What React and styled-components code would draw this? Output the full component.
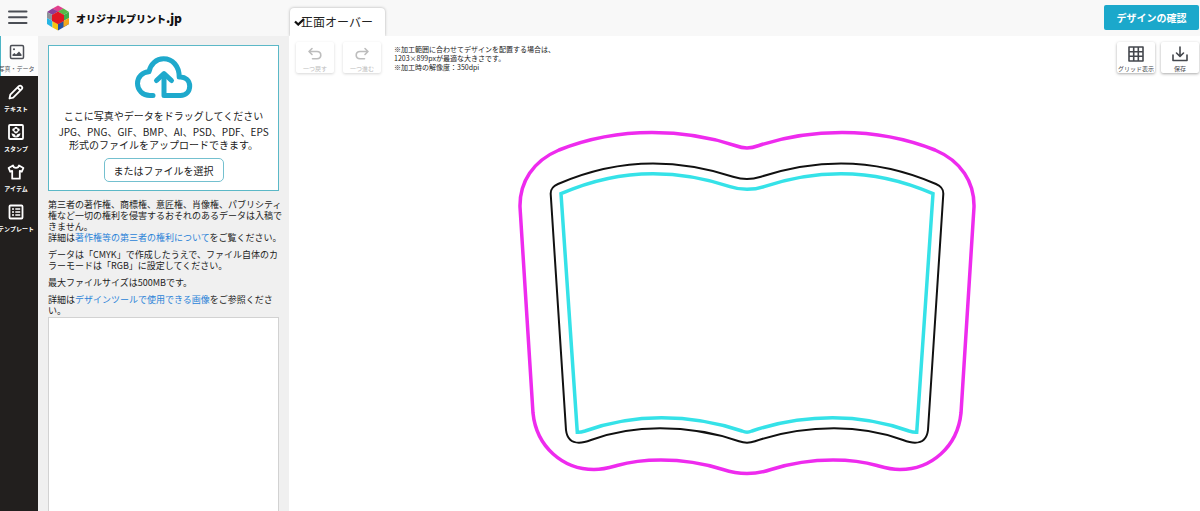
import React from "react";
import styled, { createGlobalStyle } from "styled-components";

const GlobalStyle = createGlobalStyle`
  * { box-sizing: border-box; }
  body {
    margin: 0;
    background: #fff;
    color: #222;
    font-family: "Noto Sans CJK JP", "Noto Sans", sans-serif;
  }
  button { font-family: inherit; cursor: pointer; }
  p { margin: 0; }
  svg { display: block; flex: none; }
`;

const Page = styled.div`
  display: flex;
  flex-direction: column;
  min-height: 100vh;
`;

const Header = styled.header`
  display: flex;
  align-items: stretch;
  height: 36px;
  background: #f8f8f8;
`;

const Brand = styled.div`
  display: flex;
  align-items: center;
  flex: 0 0 290px;
  padding-left: 8px;
`;

const MenuButton = styled.button`
  padding: 0;
  margin-right: 18px;
  border: 0;
  background: none;
  color: #4b4e55;
`;

const LogoLink = styled.a`
  display: flex;
  align-items: center;
  gap: 6px;
  color: #111;
  font-size: 10px;
  font-weight: 900;
  line-height: 16px;
  text-decoration: none;
  white-space: nowrap;
`;

const LogoSuffix = styled.span`
  font-size: 12px;
`;

const Tab = styled.button`
  display: flex;
  align-items: center;
  margin-top: 8px;
  padding: 0 12px 0 4px;
  border: 0;
  border-radius: 4px 4px 0 0;
  background: #fff;
  box-shadow: 0 0 3px rgba(0, 0, 0, 0.3);
  clip-path: inset(-4px -4px 0 -4px);
  color: #222;
  font-size: 12px;
  line-height: 28px;
  white-space: nowrap;
`;

const TabLabel = styled.span`
  margin-left: -4px;
`;

const ConfirmButton = styled.button`
  align-self: flex-start;
  width: 95px;
  height: 25px;
  margin: 5px 1px 0 auto;
  padding: 0;
  border: 0;
  border-radius: 2px;
  background: #1ba8cb;
  color: #fff;
  font-size: 10px;
  font-weight: 700;
`;

const Body = styled.div`
  display: flex;
  flex: 1;
`;

const SideNav = styled.nav`
  flex: 0 0 38px;
  min-width: 0;
  background: #221f1e;
`;

const NavItem = styled.button`
  display: flex;
  flex-direction: column;
  align-items: center;
  gap: 3px;
  width: 100%;
  height: 40px;
  padding: 7px 6px 0 0;
  border: 0;
  border-left: ${(p) => (p.$active ? "1px solid #4db5c6" : "0")};
  background: ${(p) => (p.$active ? "#fdfdfd" : "transparent")};
  color: ${(p) => (p.$active ? "#4b4e55" : "#fff")};
  font-size: 6px;
  font-weight: ${(p) => (p.$active ? 400 : 700)};
  line-height: 10px;
  white-space: nowrap;
`;

const Panel = styled.aside`
  display: flex;
  flex-direction: column;
  flex: 0 0 251px;
  min-width: 0;
  padding: 9px 10px 0;
  background: #f0f0f0;
`;

const DropZone = styled.section`
  display: flex;
  flex-direction: column;
  align-items: center;
  height: 146px;
  padding-top: 9px;
  border: 1px solid #5bb8c7;
  background: #fff;
  font-size: 10px;
  text-align: center;
  white-space: nowrap;
`;

const DropTitle = styled.p`
  margin-top: 9px;
  line-height: 16px;
`;

const DropFormats = styled.p`
  margin-top: 1px;
  line-height: 13px;
`;

const FileButton = styled.button`
  width: 120px;
  height: 24px;
  margin-top: 7px;
  padding: 0;
  border: 1px solid #74c0cf;
  border-radius: 5px;
  background: #fff;
  color: #222;
  font-size: 10px;
`;

const Notes = styled.div`
  display: grid;
  grid-template-columns: minmax(0, 1fr);
  gap: 6px;
  padding-top: 8px;
  font-size: 9px;
  line-height: 11px;
  white-space: nowrap;
`;

const TextLink = styled.a`
  color: #2b83d8;
  text-decoration: none;
`;

const FileList = styled.div`
  flex: 1;
  min-height: 120px;
  margin-top: 1px;
  border: 1px solid #d2d2d2;
  border-bottom: 0;
  background: #fff;
`;

const Main = styled.main`
  display: flex;
  flex: 1;
  flex-direction: column;
  min-width: 0;
`;

const Toolbar = styled.div`
  display: flex;
  align-items: flex-start;
  gap: 9px;
  padding: 6px 1px 0 7px;
`;

const ToolButton = styled.button`
  display: flex;
  flex-direction: column;
  align-items: center;
  gap: 1px;
  width: 38px;
  height: 31px;
  padding: 4px 0 0;
  border: 0;
  border-radius: 2px;
  background: #fff;
  box-shadow: 0 1px 3px rgba(0, 0, 0, ${(p) => (p.disabled ? 0.16 : 0.34)});
  color: ${(p) => (p.disabled ? "#bdbdbd" : "#44474d")};
  font-size: 6px;
  line-height: 9px;
  white-space: nowrap;
`;

const PrintInfo = styled.p`
  margin-left: 4px;
  padding-top: 3px;
  font-size: 7px;
  line-height: 9px;
`;

const ToolGroup = styled.div`
  display: flex;
  gap: 6px;
  margin-left: auto;
`;

const Canvas = styled.div`
  display: flex;
  flex: 1;
  justify-content: center;
  align-items: flex-start;
  padding-top: 55px;
`;

const MenuIcon = () => (
  <svg width="20" height="18" viewBox="0 0 20 18" aria-hidden="true">
    <path d="M1 2.500H18.500M1 8.300H18.500M1 14H18.500" stroke="currentColor" strokeWidth="2" strokeLinecap="round" />
  </svg>
);

const LogoMark = () => (
  <svg width="24" height="26" viewBox="0 0 24 26" aria-hidden="true">
    <path d="M12 0.500L17.500 3.500L12 7L6.500 3.500Z" fill="#e2408d" />
    <path d="M6.500 3.500L12 6.500L6.500 10L1 7Z" fill="#8b3d97" />
    <path d="M17.500 3.500L23 7L17.500 10L12 6.500Z" fill="#57b947" />
    <path d="M1 7L6.500 10V16L1 13Z" fill="#8f9298" />
    <path d="M1 13L6.500 16V22.500L1 19Z" fill="#27b5e4" />
    <path d="M6.500 16L12 19V25.500L6.500 22.500Z" fill="#f4c511" />
    <path d="M23 7L17.500 10V16L23 13Z" fill="#3fae49" />
    <path d="M17.500 16L12 19V25.500L23 19Z" fill="#2551a3" />
    <path d="M23 13L17.500 16V22.300L23 19Z" fill="#f3a61c" />
    <path d="M12 6.500L18 10V16L12 19.300L6 16V10Z" fill="#e01622" />
  </svg>
);

const CheckIcon = () => (
  <svg width="11" height="8" viewBox="0 0 11 8" aria-hidden="true">
    <path d="M1 3.500L4.200 6.500L10 1" fill="none" stroke="#111" strokeWidth="2.300" />
  </svg>
);

const CloudIcon = () => (
  <svg width="60" height="44" viewBox="134 55 60 44" aria-hidden="true">
    <g fill="none" stroke="#1ea9cc" strokeWidth="5" strokeLinecap="round" strokeLinejoin="round">
      <path d="M153 95.500H150C142.600 95.500 137.500 90 137.500 83.500C137.500 77 142.500 72 149 71.800C150.500 64 156.500 58.800 163.500 58.800C172.500 58.800 179.200 66 179.200 77C185.500 76.500 189.700 80.500 189.700 86C189.700 91.500 186 95.500 180.500 95.500H164V75" />
      <path d="M156.500 80.500L164 73.500L171.500 80.500" />
    </g>
  </svg>
);

const NavSvg = ({ children }) => (
  <svg
    width="18"
    height="18"
    viewBox="0 0 18 18"
    fill="none"
    stroke="currentColor"
    strokeWidth="1.800"
    strokeLinejoin="round"
    aria-hidden="true"
  >
    {children}
  </svg>
);

const PhotoIcon = () => (
  <NavSvg>
    <rect x="2.500" y="2.500" width="13" height="13" rx="1.200" strokeWidth="1.500" />
    <circle cx="6" cy="6.200" r="1" fill="currentColor" stroke="none" />
    <path d="M4.500 13V11.500L6.500 10L8 11.500L11 8.500L13.500 11.500V13Z" fill="currentColor" stroke="none" />
  </NavSvg>
);

const PencilIcon = () => (
  <NavSvg>
    <path d="M2.500 15.500L3.300 11.700L11.800 3.200Q13.200 1.900 14.600 3.300Q16 4.700 14.700 6.100L6.200 14.600Z" />
    <path d="M10.500 4.500L13.500 7.500" />
  </NavSvg>
);

const StampIcon = () => (
  <NavSvg>
    <rect x="2" y="2" width="14" height="14" rx="1" />
    <path d="M9 3.800C10.100 3.800 10.700 4.600 10.700 5.400C12 5 13 6 12.600 7.200C12.300 8.200 11.500 8.500 11 8.600C11 9.800 10.100 10.500 9 10.500C7.900 10.500 7 9.800 7 8.600C6.500 8.500 5.700 8.200 5.400 7.200C5 6 6 5 7.300 5.400C7.300 4.600 7.900 3.800 9 3.800Z" fill="currentColor" stroke="none" />
    <circle cx="9" cy="7.200" r="1.400" fill="#221f1e" stroke="none" />
    <path d="M4.500 10.300C7 10.600 8.700 11.800 9 13.800C9.300 11.800 11 10.600 13.500 10.300C13.300 13 11.500 14.600 9 14.600C6.500 14.600 4.700 13 4.500 10.300Z" fill="currentColor" stroke="none" />
  </NavSvg>
);

const ShirtIcon = () => (
  <NavSvg>
    <path d="M6 2.500L1.600 5L3.200 8.700L5.200 7.900V15.700H12.800V7.900L14.800 8.700L16.400 5L12 2.500C11.700 4.100 10.500 4.800 9 4.800C7.500 4.800 6.300 4.100 6 2.500Z" />
  </NavSvg>
);

const TemplateIcon = () => (
  <NavSvg>
    <rect x="2.500" y="2.500" width="13" height="13" rx="1" />
    <path d="M5 6H7M5 9H7M5 12H7M8.300 6H13.200M8.300 9H13.200M8.300 12H13.200" strokeWidth="1.600" />
  </NavSvg>
);

const ToolSvg = ({ children }) => (
  <svg
    width="18"
    height="17"
    viewBox="0 0 18 17"
    fill="none"
    stroke="currentColor"
    strokeWidth="1.600"
    strokeLinecap="round"
    strokeLinejoin="round"
    aria-hidden="true"
  >
    {children}
  </svg>
);

const UndoIcon = () => (
  <ToolSvg>
    <path d="M6 2.500L3 5.500L6 8.500M3 5.500H11Q14.800 5.700 14.800 9.200Q14.800 12.500 11 12.700H6.500" />
  </ToolSvg>
);

const RedoIcon = () => (
  <ToolSvg>
    <path d="M12 2.500L15 5.500L12 8.500M15 5.500H7Q3.200 5.700 3.200 9.200Q3.200 12.500 7 12.700H11.500" />
  </ToolSvg>
);

const GridIcon = () => (
  <ToolSvg>
    <path d="M2 1H16V15H2ZM6.700 1V15M11.300 1V15M2 5.700H16M2 10.300H16" />
  </ToolSvg>
);

const SaveIcon = () => (
  <ToolSvg>
    <path d="M9 1V10M5.500 7L9 10.300L12.500 7M2 9V14.500H16V9" />
  </ToolSvg>
);

const HalfOutline = () => (
  <>
    <path
      stroke="#ee2bee"
      strokeWidth="3.500"
      d="M747 148C742 148 740.500 147.500 735 145.500C708 136.500 680 132.500 652 132.500C618 132.500 588 138.500 559 150C533 161 519.500 182 520 207L533 413C536.500 447 563 469.500 594 469.500C604 469.500 610 467.500 617 465.500C631 461.500 645 460 661 460C684 460 704 463.500 723 469.500C732 472.500 739 473.500 747 473.500"
    />
    <path
      stroke="#111"
      strokeWidth="2"
      d="M747 179C742 179 739 178.500 733 176.700C706 168 681 163.500 653 163.500C619 163.500 588 171 558 184C552.500 186.500 550.500 189 550.700 194L566 430C567 438.500 572 442.700 579 442.700C583 442.700 587 441.500 591 440C613 432 636 428.300 660 428.300C689 428.300 715 433 739 441.300C742 442.300 744 442.700 747 442.700"
    />
    <path
      stroke="#35e2e8"
      strokeWidth="3.500"
      strokeLinejoin="miter"
      d="M747 189.300C741 189.300 736 188.700 730 186.700C704 177.800 680 173.700 653 173.700C620 173.700 590 181 561 193.700L577.300 432.300C580 432.500 582 432 585 431C610 422 635 417.700 661.500 417.700C690 417.700 717 422.500 742 431C744 431.800 745 432.200 747 432.300"
    />
  </>
);

const Artwork = () => (
  <svg width="470" height="350" viewBox="510 128 470 350" fill="none" role="img" aria-label="正面オーバー">
    <HalfOutline />
    <g transform="translate(1494 0) scale(-1 1)">
      <HalfOutline />
    </g>
  </svg>
);

const navItems = [
  { label: "写真・データ", Icon: PhotoIcon, active: true },
  { label: "テキスト", Icon: PencilIcon },
  { label: "スタンプ", Icon: StampIcon },
  { label: "アイテム", Icon: ShirtIcon },
  { label: "テンプレート", Icon: TemplateIcon },
];

export default function App() {
  return (
    <Page>
      <GlobalStyle />
      <Header>
        <Brand>
          <MenuButton type="button" aria-label="メニュー">
            <MenuIcon />
          </MenuButton>
          <LogoLink href="#">
            <LogoMark />
            <span>
              オリジナルプリント<LogoSuffix>.jp</LogoSuffix>
            </span>
          </LogoLink>
        </Brand>
        <Tab type="button">
          <CheckIcon />
          <TabLabel>正面オーバー</TabLabel>
        </Tab>
        <ConfirmButton type="button">デザインの確認</ConfirmButton>
      </Header>
      <Body>
        <SideNav>
          {navItems.map(({ label, Icon, active }) => (
            <NavItem key={label} type="button" $active={active}>
              <Icon />
              <span>{label}</span>
            </NavItem>
          ))}
        </SideNav>
        <Panel>
          <DropZone>
            <CloudIcon />
            <DropTitle>ここに写真やデータをドラッグしてください</DropTitle>
            <DropFormats>
              JPG、PNG、GIF、BMP、AI、PSD、PDF、EPS
              <br />
              形式のファイルをアップロードできます。
            </DropFormats>
            <FileButton type="button">またはファイルを選択</FileButton>
          </DropZone>
          <Notes>
            <p>
              第三者の著作権、商標権、意匠権、肖像権、パブリシティ
              <br />
              権など一切の権利を侵害するおそれのあるデータは入稿で
              <br />
              きません。
              <br />
              詳細は<TextLink href="#">著作権等の第三者の権利について</TextLink>をご覧ください。
            </p>
            <p>
              データは「CMYK」で作成したうえで、ファイル自体のカ
              <br />
              ラーモードは「RGB」に設定してください。
            </p>
            <p>最大ファイルサイズは500MBです。</p>
            <p>
              詳細は<TextLink href="#">デザインツールで使用できる画像</TextLink>をご参照くださ
              <br />
              い。
            </p>
          </Notes>
          <FileList />
        </Panel>
        <Main>
          <Toolbar>
            <ToolButton type="button" disabled>
              <UndoIcon />
              <span>一つ戻す</span>
            </ToolButton>
            <ToolButton type="button" disabled>
              <RedoIcon />
              <span>一つ進む</span>
            </ToolButton>
            <PrintInfo>
              ※加工範囲に合わせてデザインを配置する場合は、
              <br />
              1203×899pxが最適な大きさです。
              <br />
              ※加工時の解像度：350dpi
            </PrintInfo>
            <ToolGroup>
              <ToolButton type="button">
                <GridIcon />
                <span>グリッド表示</span>
              </ToolButton>
              <ToolButton type="button">
                <SaveIcon />
                <span>保存</span>
              </ToolButton>
            </ToolGroup>
          </Toolbar>
          <Canvas>
            <Artwork />
          </Canvas>
        </Main>
      </Body>
    </Page>
  );
}
